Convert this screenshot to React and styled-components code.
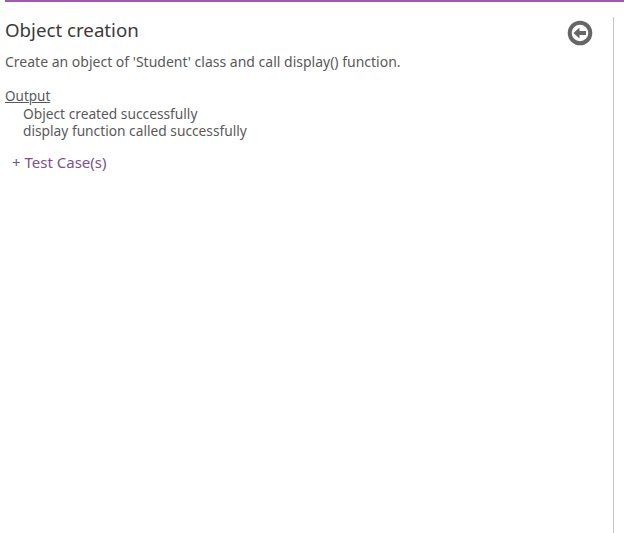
import React from 'react';
import styled, { createGlobalStyle } from 'styled-components';

const GlobalStyle = createGlobalStyle`
  html, body {
    margin: 0;
    padding: 0;
    background: #fff;
  }
  body {
    font-family: "Noto Sans", "Open Sans", sans-serif;
  }
`
const Page = styled.div`
  width: 624px;
  height: 533px;
  overflow: hidden;
  padding-left: 5px;
  box-sizing: border-box;
`
const TopBar = styled.div`
  height: 2px;
  background-color: #9b59b0;
`
const Body = styled.div`
  display: flex;
  justify-content: space-between;
  height: 531px;
`
const Content = styled.div`
  flex: 1;
`
const Title = styled.h1`
  margin: 16px 0 0 0;
  font-size: 18.7px;
  line-height: 24px;
  font-weight: 400;
  color: #3a3a3a;
`
const Description = styled.p`
  margin: 11px 0 0 0;
  font-size: 14px;
  line-height: 17px;
  color: #5a5a5a;
`
const OutputLabel = styled.div`
  margin-top: 18px;
  font-size: 13.5px;
  line-height: 17px;
  color: #5a5a5a;
  text-decoration: underline;
`
const OutputLine = styled.div`
  padding-left: 18px;
  font-size: 13.75px;
  line-height: 17px;
  color: #5a5a5a;
`
const TestCases = styled.div`
  margin: 15px 0 0 7px;
  font-size: 15px;
  line-height: 17px;
  color: #7d4f94;
`
const Side = styled.div`
  display: flex;
  width: 58px;
  flex-shrink: 0;
`
const BackButton = styled.div`
  width: 26px;
  height: 26px;
  margin: 18px 0 0 1px;
  color: #666;
`
const Divider = styled.div`
  width: 1px;
  margin: 15px 0 0 20px;
  background-color: #c4c4c4;
`

const BackIcon = () => (
  <svg width="26" height="26" viewBox="0 0 26 26">
    <circle cx="13" cy="13" r="10.3" fill="none" stroke="currentColor" strokeWidth="4" />
    <path d="M6.5 13 L12.5 7.5 V11 H19 V15 H12.5 V18.5 Z" fill="currentColor" />
  </svg>
)

export default function App() {
  return (
    <Page>
      <GlobalStyle />
      <TopBar />
      <Body>
        <Content>
          <Title>Object creation</Title>
          <Description>Create an object of 'Student' class and call display() function.</Description>
          <OutputLabel>Output</OutputLabel>
          <OutputLine>Object created successfully</OutputLine>
          <OutputLine>display function called successfully</OutputLine>
          <TestCases>+ Test Case(s)</TestCases>
        </Content>
        <Side>
          <BackButton><BackIcon /></BackButton>
          <Divider />
        </Side>
      </Body>
    </Page>
  )
}
